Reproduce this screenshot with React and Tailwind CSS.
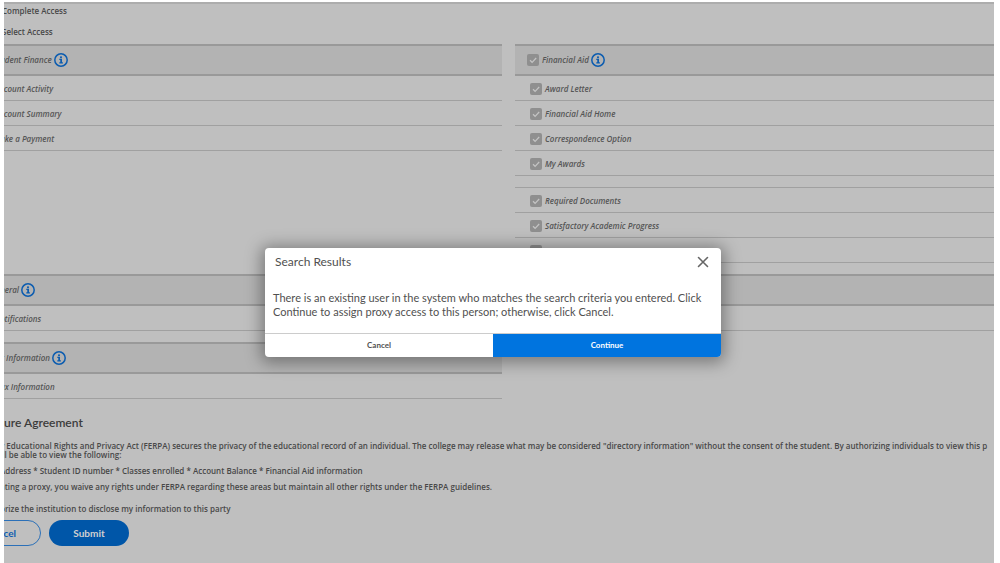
import React from "react";

function InfoIcon() {
  return (
    <svg viewBox="0 0 28 28" className="size-3.5 shrink-0" aria-hidden="true">
      <circle cx="14" cy="14" r="12.4" fill="none" stroke="#0b5cb0" strokeWidth="3" />
      <circle cx="14" cy="8.4" r="2.1" fill="#0b5cb0" />
      <path d="M10.6 11.6h5.4v7h1.8v2.6h-7.2v-2.6h1.9v-4.4h-1.9z" fill="#0b5cb0" />
    </svg>
  );
}

function Check({ label }) {
  return (
    <span className="grid size-3 shrink-0">
      <input
        type="checkbox"
        defaultChecked
        disabled
        aria-label={label}
        className="col-start-1 row-start-1 size-3 appearance-none rounded-xs bg-[#8f8f8f]"
      />
      <svg viewBox="0 0 12 12" className="col-start-1 row-start-1 size-3" aria-hidden="true">
        <path d="M3 6.3l2.1 2L9.2 4" fill="none" stroke="#c4c4c4" strokeWidth="1.2" />
      </svg>
    </span>
  );
}

function Header({ title, checked, hidden }) {
  return (
    <h3 className="flex h-8 items-center border-y-2 border-[#999] bg-[#b3b3b3] text-[8px] font-semibold italic">
      {!hidden && (
        <span className={checked ? "flex items-center gap-0.5 pl-3" : "flex items-center gap-0.5"}>
          {checked ? (
            <label className="flex items-center gap-[3px]">
              <Check />
              {title}
            </label>
          ) : (
            title
          )}
          <InfoIcon />
        </span>
      )}
    </h3>
  );
}

function Row({ text, checked }) {
  return (
    <li className="flex h-[25px] items-center border-b border-[#a0a0a0] pt-0.5 text-[8px] font-semibold italic">
      {checked ? (
        <label className="flex items-center gap-[3px] pl-[15px]">
          <Check label={text ? undefined : "Additional access"} />
          {text}
        </label>
      ) : (
        text
      )}
    </li>
  );
}

function Panel({ title, items, checked, hidden }) {
  return (
    <section>
      <Header title={title} checked={checked} hidden={hidden} />
      <ul>
        {items.map((item, i) =>
          item === null ? (
            <li key={i} className={hidden ? "h-[25px] border-b border-[#a0a0a0]" : "h-3 border-b border-[#a0a0a0]"} />
          ) : (
            <Row key={i} text={item} checked={checked} />
          )
        )}
      </ul>
    </section>
  );
}

function Dialog() {
  return (
    <div className="absolute inset-0 flex items-start justify-center pt-[244px] pr-3 font-[Lato,sans-serif]">
      <div
        role="dialog"
        aria-modal="true"
        aria-labelledby="dialog-title"
        className="w-[456px] overflow-hidden rounded-sm bg-white text-[#505050] shadow-[0_2px_16px_4px_rgba(0,0,0,0.35)]"
      >
        <div className="flex h-7 items-center justify-between pr-3 pl-2.5">
          <h2 id="dialog-title" className="text-[12px]">Search Results</h2>
          <button type="button" aria-label="Close" className="size-3">
            <svg viewBox="0 0 12 12" className="size-3" aria-hidden="true">
              <path d="M1.5 1.5l9 9M10.5 1.5l-9 9" fill="none" stroke="#666" strokeWidth="1.6" strokeLinecap="round" />
            </svg>
          </button>
        </div>
        <p className="h-[57px] pt-[15px] pl-2 text-[11px] leading-[14px]">
          There is an existing user in the system who matches the search criteria you entered. Click
          <br />
          Continue to assign proxy access to this person; otherwise, click Cancel.
        </p>
        <div className="grid h-6 grid-cols-2 border-t border-[#ccc] text-[8px] font-bold">
          <button type="button" className="pb-0.5">Cancel</button>
          <button type="button" className="bg-[#0074df] pb-0.5 text-white">Continue</button>
        </div>
      </div>
    </div>
  );
}

export default function App() {
  return (
    <div className="min-h-screen bg-white pt-0.5 pr-1.5 pl-1 font-['Open_Sans','Noto_Sans',sans-serif]">
      <main className="relative min-h-[calc(100vh-2px)] overflow-hidden border-t-2 border-[#adadad] bg-[#bfbfbf] text-[#555]">
        <div className="-ml-1">
          <div className="h-11 text-[8px] leading-[21px] font-semibold text-[#484848]">
            <p className="-mt-1 pl-0.5">Complete Access</p>
            <p className="pl-0.5">Select Access</p>
          </div>
          <div className="grid grid-cols-[502fr_479fr] gap-x-[13px] gap-y-[11px]">
            <Panel title="udent Finance" items={["ccount Activity", "ccount Summary", "ake a Payment"]} />
            <Panel
              title="Financial Aid"
              checked
              items={[
                "Award Letter",
                "Financial Aid Home",
                "Correspondence Option",
                "My Awards",
                null,
                "Required Documents",
                "Satisfactory Academic Progress",
                "",
              ]}
            />
            <Panel title="neral" items={["otifications"]} />
            <Panel hidden items={[null]} />
            <Panel title="x Information" items={["ax Information"]} />
          </div>
          <h2 className="pt-[15px] pl-1 font-[Lato,sans-serif] text-[12px] leading-[18px] font-semibold text-[#3c3c3c]">ure Agreement</h2>
          <div className="space-y-[7px] pt-[9px] text-[8px] leading-[9px] font-semibold whitespace-nowrap text-[#484848]">
            <p>
              y Educational Rights and Privacy Act (FERPA) secures the privacy of the educational record of an individual. The college may release what may be considered "directory information" without the consent of the student. By authorizing individuals to view this p
              <br />
              ill be able to view the following:
            </p>
            <p>Address * Student ID number * Classes enrolled * Account Balance * Financial Aid information</p>
            <p>ating a proxy, you waive any rights under FERPA regarding these areas but maintain all other rights under the FERPA guidelines.</p>
            <p className="pt-1.5">orize the institution to disclose my information to this party</p>
          </div>
          <div className="flex gap-2 pt-[7px] font-[Lato,sans-serif] text-[10px] font-bold">
            <button type="button" className="h-[26px] w-[41px] rounded-r-full border border-[#2b70b8] pr-6 text-right text-[#0b5cb0]">
              cel
            </button>
            <button type="button" className="h-[26px] w-20 rounded-full bg-[#0056a8] text-[#d0d0d0]">Submit</button>
          </div>
        </div>
        <Dialog />
      </main>
    </div>
  );
}
